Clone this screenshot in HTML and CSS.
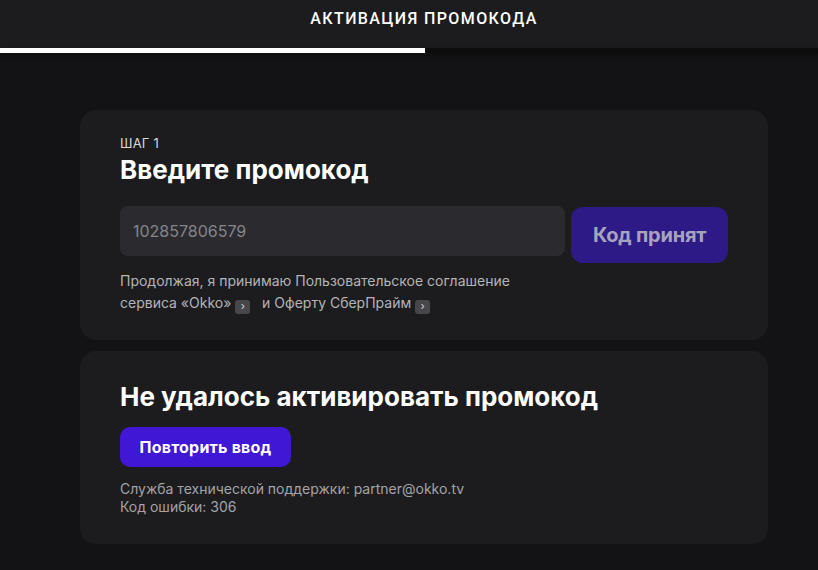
FILE: index.html
```html
<!DOCTYPE html>
<html lang="ru">

<head>
  <meta charset="UTF-8" />
  <meta name="viewport" content="width=device-width, initial-scale=1.0" />
  <title>Активация промокода</title>
  <link rel="stylesheet" href="styles.css">
</head>

<body>
  <!-- Top bar with progress -->
  <header class="topbar">
    <div class="topbar-title">АКТИВАЦИЯ ПРОМОКОДА</div>
  </header>
  <div class="progress">
    <div class="progress-fill"></div>
  </div>

  <main class="content">
    <!-- Step 1 -->
    <section class="card">
      <div class="step-label">ШАГ 1</div>
      <h2 class="card-title">Введите промокод</h2>
      <form class="promo-form">
        <input class="promo-input" type="text" value="102857806579" readonly />
        <button type="button" class="accepted-btn">Код принят</button>
      </form>
      <p class="terms">
        Продолжая, я принимаю Пользовательское соглашение<br />
        сервиса «Okko» <span class="chev">&rsaquo;</span> &nbsp; и Оферту СберПрайм <span class="chev">&rsaquo;</span>
      </p>
    </section>

    <!-- Error -->
    <section class="card card-error">
      <h2 class="card-title">Не удалось активировать промокод</h2>
      <button type="button" class="retry-btn">Повторить ввод</button>
      <p class="support">
        Служба технической поддержки: partner@okko.tv<br />
        Код ошибки: 306
      </p>
    </section>
  </main>
</body>

</html>
```

FILE: styles.css
```css
/* Basic page styling */
body {
  margin: 0;
  background-color: #131315;
  font-family: Inter, "Noto Sans", sans-serif;
  color: #fff;
}

/* Top bar */
.topbar {
  height: 48px;
  background-color: #1c1c1e;
  display: flex;
  justify-content: center;
}

.topbar-title {
  margin-top: 9px;
  padding-left: 30px;
  font-family: Roboto, sans-serif;
  font-size: 16px;
  font-weight: 500;
  letter-spacing: 1.4px;
}

.progress {
  height: 5px;
  background-color: #0c0c0d;
  box-shadow: 0 2px 4px rgba(0, 0, 0, 0.4);
}

.progress-fill {
  width: 425px;
  height: 100%;
  background-color: #fff;
}

/* Cards */
.content {
  width: 688px;
  margin: 57px 0 0 80px;
  display: flex;
  flex-direction: column;
  gap: 11px;
}

.card {
  background-color: #1c1c1e;
  border-radius: 16px;
  padding: 25px 40px 26px;
}

.step-label {
  font-size: 13px;
  color: #d8d8dc;
  line-height: 16px;
  letter-spacing: 0.2px;
}

.card-title {
  margin: 2px 0 0;
  font-size: 26px;
  line-height: 34px;
  font-weight: 700;
}

.promo-form {
  display: flex;
  align-items: flex-start;
  gap: 6px;
  margin-top: 19px;
}

.promo-input {
  width: 446px;
  height: 50px;
  box-sizing: border-box;
  border: none;
  border-radius: 8px;
  background-color: #2b2b2f;
  padding: 0 13px;
  font-family: Inter, sans-serif;
  font-size: 16px;
  color: #85858a;
  outline: none;
}

.accepted-btn {
  width: 157px;
  height: 56px;
  margin-top: 1px;
  border: none;
  border-radius: 12px;
  background-color: #2d1a86;
  color: #a7a3bf;
  font-family: Inter, sans-serif;
  font-size: 20px;
  font-weight: 700;
  letter-spacing: -0.2px;
}

.terms {
  margin: 7px 0 0;
  font-size: 14px;
  line-height: 22px;
  color: #b4b4b8;
}

.chev {
  display: inline-block;
  width: 15px;
  height: 14px;
  line-height: 13px;
  text-align: center;
  border-radius: 3px;
  background-color: #47474b;
  color: #d0d0d4;
  font-size: 11px;
  vertical-align: -2px;
}

/* Error card */
.card-error {
  padding-top: 27px;
  padding-bottom: 28px;
}

.retry-btn {
  display: block;
  margin-top: 13px;
  width: 171px;
  height: 40px;
  border: none;
  border-radius: 10px;
  background-color: #3f17d4;
  color: #fff;
  font-family: Inter, sans-serif;
  font-size: 16px;
  font-weight: 700;
  letter-spacing: 0.2px;
}

.support {
  margin: 13px 0 0;
  font-size: 14px;
  line-height: 18px;
  color: #a3a3a7;
}
```
